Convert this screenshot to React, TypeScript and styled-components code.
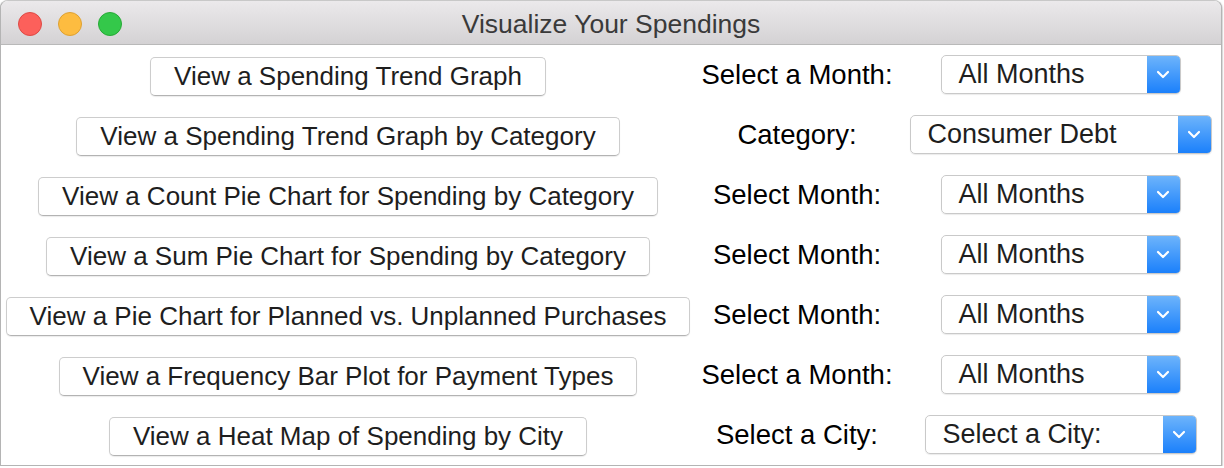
import React from "react";
import styled, { createGlobalStyle } from "styled-components";

const Global = createGlobalStyle`
  html, body { margin: 0; padding: 0; background: #ffffff; }
  body { font-family: "Liberation Sans", Arial, sans-serif; }
`;

const Window = styled.div`
  width: 1222px;
  height: 466px;
  box-sizing: border-box;
  border: 1px solid #b4b4b4;
  border-top-color: #c8c8c8;
  border-radius: 8px 8px 0 0;
  box-shadow: 0 1px 2px rgba(0, 0, 0, 0.55);
  background: #ffffff;
  overflow: hidden;
  display: flex;
  flex-direction: column;
`;

const TitleBar = styled.div`
  height: 44px;
  flex: none;
  box-sizing: border-box;
  border-bottom: 1px solid #b9b9b9;
  background: linear-gradient(#ebe9eb, #d4d2d4);
  display: flex;
  align-items: center;
  position: relative;
`;

const Lights = styled.div`
  position: absolute;
  left: 17px;
  top: 11px;
  display: flex;
  gap: 16px;
`;

const Light = styled.span<{ $fill: string; $edge: string }>`
  width: 24px;
  height: 24px;
  box-sizing: border-box;
  border-radius: 50%;
  background: ${(p) => p.$fill};
  border: 1px solid ${(p) => p.$edge};
`;

const Title = styled.div`
  flex: 1;
  text-align: center;
  font-size: 26.5px;
  color: #3a3a3a;
  padding-top: 3px;
`;

const Grid = styled.div`
  display: grid;
  grid-template-columns: 692px 206px 1fr;
  grid-auto-rows: 60px;
  align-items: center;
  padding-left: 1px;
`;

const Cell = styled.div`
  display: flex;
  justify-content: center;
  align-items: center;
`;

const Button = styled.button`
  height: 39px;
  padding: 0 23px;
  box-sizing: border-box;
  background: #ffffff;
  border: 1px solid #cdcdcd;
  border-bottom-color: #b3b3b3;
  border-radius: 5px;
  box-shadow: 0 1px 1px rgba(0, 0, 0, 0.08);
  font-family: "Liberation Sans", Arial, sans-serif;
  font-size: 26px;
  color: #1e1e1e;
  white-space: nowrap;
  margin-top: 2px;
`;

const Label = styled.span`
  font-size: 27.5px;
  color: #000000;
  white-space: nowrap;
`;

const Select = styled.div<{ $w: number }>`
  width: ${(p) => p.$w}px;
  height: 39px;
  box-sizing: border-box;
  border: 1px solid #c9c9c9;
  border-radius: 5px;
  box-shadow: 0 1px 1px rgba(0, 0, 0, 0.08);
  display: flex;
  align-items: stretch;
  overflow: hidden;
  margin-bottom: 2px;
`;

const SelectText = styled.span`
  flex: 1;
  display: flex;
  align-items: center;
  padding-left: 17px;
  padding-top: 1px;
  font-size: 27px;
  color: #1e1e1e;
  white-space: nowrap;
`;

const Arrow = styled.span`
  width: 33px;
  flex: none;
  background: linear-gradient(#6db4fb, #1b80fb);
  display: flex;
  align-items: center;
  justify-content: center;
`;

const Chevron = () => (
  <svg width="14" height="9" viewBox="0 0 14 9">
    <path d="M2 2 L7 7 L12 2" fill="none" stroke="#ffffff" strokeWidth="2.2" strokeLinecap="round" strokeLinejoin="round" />
  </svg>
);

const rows = [
  { button: "View a Spending Trend Graph", label: "Select a Month:", value: "All Months", w: 240 },
  { button: "View a Spending Trend Graph by Category", label: "Category:", value: "Consumer Debt", w: 302 },
  { button: "View a Count Pie Chart for Spending by Category", label: "Select Month:", value: "All Months", w: 240 },
  { button: "View a Sum Pie Chart for Spending by Category", label: "Select Month:", value: "All Months", w: 240 },
  { button: "View a Pie Chart for Planned vs. Unplanned Purchases", label: "Select Month:", value: "All Months", w: 240 },
  { button: "View a Frequency Bar Plot for Payment Types", label: "Select a Month:", value: "All Months", w: 240 },
  { button: "View a Heat Map of Spending by City", label: "Select a City:", value: "Select a City:", w: 272 },
];

export default function App() {
  return (
    <>
      <Global />
      <Window>
        <TitleBar>
          <Lights>
            <Light $fill="#fc605b" $edge="#de4a45" />
            <Light $fill="#fdbc40" $edge="#dea132" />
            <Light $fill="#34c84a" $edge="#27aa36" />
          </Lights>
          <Title>Visualize Your Spendings</Title>
        </TitleBar>
        <Grid>
          {rows.map((r, i) => (
            <React.Fragment key={i}>
              <Cell>
                <Button>{r.button}</Button>
              </Cell>
              <Cell>
                <Label>{r.label}</Label>
              </Cell>
              <Cell>
                <Select $w={r.w}>
                  <SelectText>{r.value}</SelectText>
                  <Arrow>
                    <Chevron />
                  </Arrow>
                </Select>
              </Cell>
            </React.Fragment>
          ))}
        </Grid>
      </Window>
    </>
  );
}
